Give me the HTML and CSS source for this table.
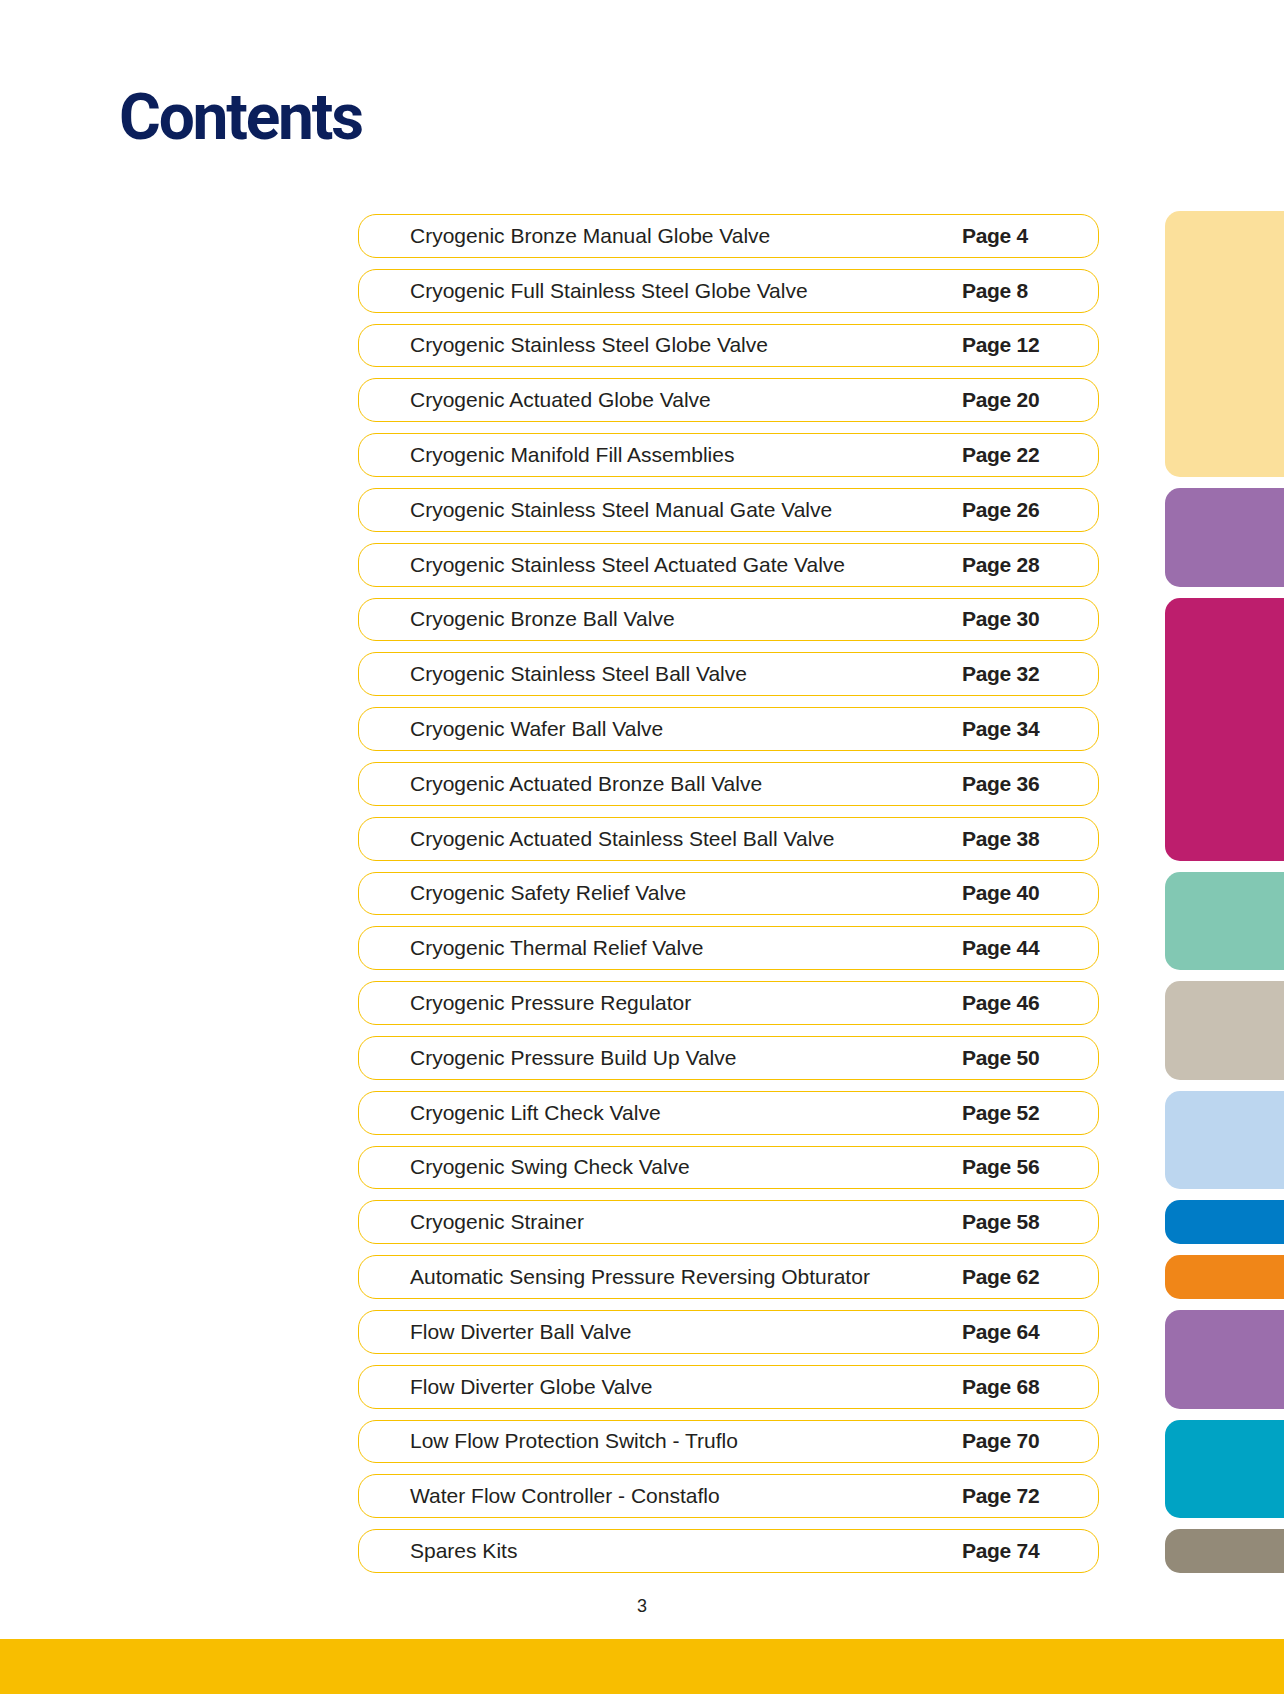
FILE: index.html
```html
<!DOCTYPE html>
<html lang="en">
<head>
<meta charset="utf-8">
<title>Contents</title>
<link rel="stylesheet" href="styles.css">
</head>
<body>
<div class="page">
  <h1 class="title">Contents</h1>
  <div class="toc">
    <ul class="entries">
      <li class="entry"><span class="name">Cryogenic Bronze Manual Globe Valve</span><span class="pg">Page 4</span></li>
      <li class="entry"><span class="name">Cryogenic Full Stainless Steel Globe Valve</span><span class="pg">Page 8</span></li>
      <li class="entry"><span class="name">Cryogenic Stainless Steel Globe Valve</span><span class="pg">Page 12</span></li>
      <li class="entry"><span class="name">Cryogenic Actuated Globe Valve</span><span class="pg">Page 20</span></li>
      <li class="entry"><span class="name">Cryogenic Manifold Fill Assemblies</span><span class="pg">Page 22</span></li>
      <li class="entry"><span class="name">Cryogenic Stainless Steel Manual Gate Valve</span><span class="pg">Page 26</span></li>
      <li class="entry"><span class="name">Cryogenic Stainless Steel Actuated Gate Valve</span><span class="pg">Page 28</span></li>
      <li class="entry"><span class="name">Cryogenic Bronze Ball Valve</span><span class="pg">Page 30</span></li>
      <li class="entry"><span class="name">Cryogenic Stainless Steel Ball Valve</span><span class="pg">Page 32</span></li>
      <li class="entry"><span class="name">Cryogenic Wafer Ball Valve</span><span class="pg">Page 34</span></li>
      <li class="entry"><span class="name">Cryogenic Actuated Bronze Ball Valve</span><span class="pg">Page 36</span></li>
      <li class="entry"><span class="name">Cryogenic Actuated Stainless Steel Ball Valve</span><span class="pg">Page 38</span></li>
      <li class="entry"><span class="name">Cryogenic Safety Relief Valve</span><span class="pg">Page 40</span></li>
      <li class="entry"><span class="name">Cryogenic Thermal Relief Valve</span><span class="pg">Page 44</span></li>
      <li class="entry"><span class="name">Cryogenic Pressure Regulator</span><span class="pg">Page 46</span></li>
      <li class="entry"><span class="name">Cryogenic Pressure Build Up Valve</span><span class="pg">Page 50</span></li>
      <li class="entry"><span class="name">Cryogenic Lift Check Valve</span><span class="pg">Page 52</span></li>
      <li class="entry"><span class="name">Cryogenic Swing Check Valve</span><span class="pg">Page 56</span></li>
      <li class="entry"><span class="name">Cryogenic Strainer</span><span class="pg">Page 58</span></li>
      <li class="entry"><span class="name">Automatic Sensing Pressure Reversing Obturator</span><span class="pg">Page 62</span></li>
      <li class="entry"><span class="name">Flow Diverter Ball Valve</span><span class="pg">Page 64</span></li>
      <li class="entry"><span class="name">Flow Diverter Globe Valve</span><span class="pg">Page 68</span></li>
      <li class="entry"><span class="name">Low Flow Protection Switch - Truflo</span><span class="pg">Page 70</span></li>
      <li class="entry"><span class="name">Water Flow Controller - Constaflo</span><span class="pg">Page 72</span></li>
      <li class="entry"><span class="name">Spares Kits</span><span class="pg">Page 74</span></li>
    </ul>
    <div class="tabs">
      <div class="tab h5 first c-cream"></div>
      <div class="tab h2 c-purple"></div>
      <div class="tab h5 c-magenta"></div>
      <div class="tab h2 c-mint"></div>
      <div class="tab h2 c-stone"></div>
      <div class="tab h2 c-sky"></div>
      <div class="tab h1 c-blue"></div>
      <div class="tab h1 c-orange"></div>
      <div class="tab h2 c-purple"></div>
      <div class="tab h2 c-cyan"></div>
      <div class="tab h1 c-taupe"></div>
    </div>
  </div>
  <div class="pagenum">3</div>
  <div class="footer-bar"></div>
</div>
</body>
</html>
```
FILE: styles.css
```css
html, body {
  margin: 0;
  padding: 0;
  background: #ffffff;
}

.page {
  width: 1284px;
  height: 1694px;
  overflow: hidden;
  padding-top: 86px;
  box-sizing: border-box;
  display: flex;
  flex-direction: column;
  font-family: "Liberation Sans", Arial, sans-serif;
  color: #231f20;
}

.title {
  margin: 0 0 0 119px;
  font-family: Roboto, "Liberation Sans", sans-serif;
  font-weight: 700;
  font-size: 64px;
  line-height: 64px;
  height: 64px;
  letter-spacing: -2.2px;
  color: #0b1f5b;
}

.toc {
  margin-top: 64px;
  display: flex;
  align-items: flex-start;
}

.entries {
  list-style: none;
  margin: 0 0 0 358px;
  padding: 0;
  width: 741px;
  display: flex;
  flex-direction: column;
  gap: 11px;
}

.entry {
  box-sizing: border-box;
  height: 43.8px;
  border: 1.2px solid #f7c100;
  border-radius: 18px;
  display: flex;
  align-items: center;
  padding-left: 51px;
  font-size: 21px;
}

.name {
  width: 552px;
  flex: none;
  white-space: nowrap;
}

.pg {
  font-weight: 700;
  letter-spacing: -0.3px;
  white-space: nowrap;
}

.tabs {
  margin-left: 66px;
  width: 119px;
  display: flex;
  flex-direction: column;
  gap: 11px;
}

.tab {
  border-radius: 15px 0 0 15px;
}

.h1 { height: 43.8px; }
.h2 { height: 98.6px; }
.h5 { height: 263px; }

.first {
  margin-top: -3px;
  height: 266px;
}

.c-cream { background: #fbe09b; }
.c-purple { background: #9b6eac; }
.c-magenta { background: #bd1e6d; }
.c-mint { background: #82c8b3; }
.c-stone { background: #c8c0b2; }
.c-sky { background: #bcd6ef; }
.c-blue { background: #007cc6; }
.c-orange { background: #f08618; }
.c-cyan { background: #00a3c4; }
.c-taupe { background: #938a78; }

.pagenum {
  margin-top: 24px;
  text-align: center;
  font-size: 18px;
  line-height: 18px;
  height: 18px;
}

.footer-bar {
  margin-top: auto;
  height: 55px;
  background: #f8be00;
}
```
